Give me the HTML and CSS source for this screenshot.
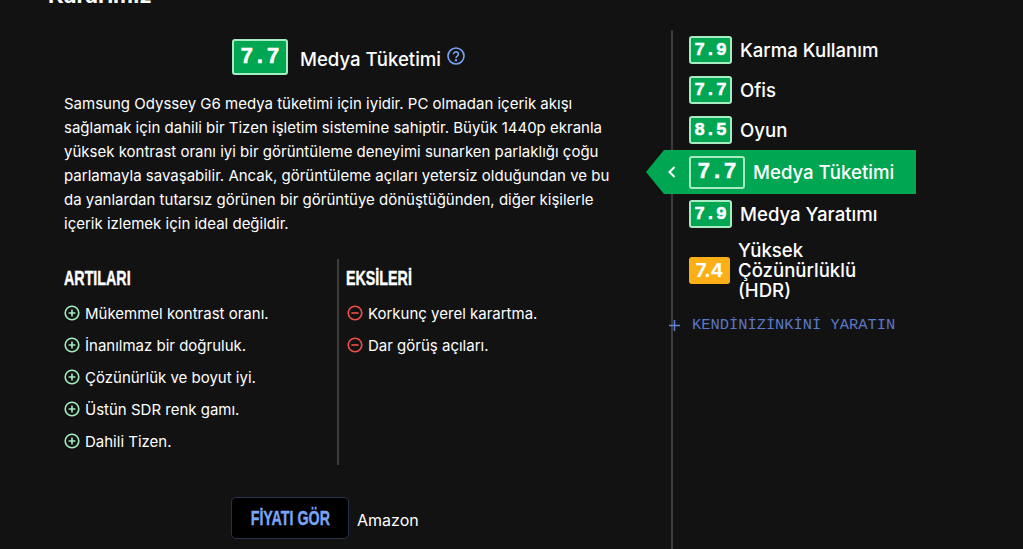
FILE: index.html
```html
<!DOCTYPE html>
<html lang="tr">
<head>
    <meta charset="UTF-8">
    <meta name="viewport" content="width=device-width, initial-scale=1.0">
    <title>Karar</title>
    <link rel="stylesheet" href="styles.css">
</head>
<body>
    <div class="panel">
        <h2 class="page-title">Kararımız</h2>

        <div class="columns">
            <!-- Main usage text -->
            <main class="verdict">
                <div class="verdict-head">
                    <span class="score score-large">7.7</span>
                    <span class="verdict-name">Medya Tüketimi</span>
                    <svg class="help-icon" width="18" height="18" viewBox="0 0 18 18" fill="none" stroke="#7aa5f5" stroke-width="1.6">
                        <circle cx="9" cy="9" r="8"></circle>
                        <path d="M6.600 7.200a2.400 2.400 0 1 1 3.700 2c-.9.6-1.300 1-1.300 1.900"></path>
                        <circle cx="9" cy="13.300" r=".5"></circle>
                    </svg>
                </div>

                <p class="verdict-text">Samsung Odyssey G6 medya tüketimi için iyidir. PC olmadan içerik akışı sağlamak için dahili bir Tizen işletim sistemine sahiptir. Büyük 1440p ekranla yüksek kontrast oranı iyi bir görüntüleme deneyimi sunarken parlaklığı çoğu parlamayla savaşabilir. Ancak, görüntüleme açıları yetersiz olduğundan ve bu da yanlardan tutarsız görünen bir görüntüye dönüştüğünden, diğer kişilerle içerik izlemek için ideal değildir.</p>

                <div class="pros-cons">
                    <div class="pros">
                        <h3 class="list-title">ARTILARI</h3>
                        <ul class="list">
                            <li><svg class="mark" viewBox="0 0 16 16"><circle class="mark-ring plus" cx="8" cy="8" r="6.800"></circle><path class="mark-line plus" d="M4.600 8h6.800M8 4.600v6.800"></path></svg>Mükemmel kontrast oranı.</li>
                            <li><svg class="mark" viewBox="0 0 16 16"><circle class="mark-ring plus" cx="8" cy="8" r="6.800"></circle><path class="mark-line plus" d="M4.600 8h6.800M8 4.600v6.800"></path></svg>İnanılmaz bir doğruluk.</li>
                            <li><svg class="mark" viewBox="0 0 16 16"><circle class="mark-ring plus" cx="8" cy="8" r="6.800"></circle><path class="mark-line plus" d="M4.600 8h6.800M8 4.600v6.800"></path></svg>Çözünürlük ve boyut iyi.</li>
                            <li><svg class="mark" viewBox="0 0 16 16"><circle class="mark-ring plus" cx="8" cy="8" r="6.800"></circle><path class="mark-line plus" d="M4.600 8h6.800M8 4.600v6.800"></path></svg>Üstün SDR renk gamı.</li>
                            <li><svg class="mark" viewBox="0 0 16 16"><circle class="mark-ring plus" cx="8" cy="8" r="6.800"></circle><path class="mark-line plus" d="M4.600 8h6.800M8 4.600v6.800"></path></svg>Dahili Tizen.</li>
                        </ul>
                    </div>
                    <div class="cons">
                        <h3 class="list-title">EKSİLERİ</h3>
                        <ul class="list">
                            <li><svg class="mark" viewBox="0 0 16 16"><circle class="mark-ring minus" cx="8" cy="8" r="6.800"></circle><path class="mark-line minus" d="M4.400 8h7.200"></path></svg>Korkunç yerel karartma.</li>
                            <li><svg class="mark" viewBox="0 0 16 16"><circle class="mark-ring minus" cx="8" cy="8" r="6.800"></circle><path class="mark-line minus" d="M4.400 8h7.200"></path></svg>Dar görüş açıları.</li>
                        </ul>
                    </div>
                </div>

                <div class="price-row">
                    <a class="price-button" href="#"><span class="price-label">FİYATI GÖR</span></a>
                    <span class="store">Amazon</span>
                </div>
            </main>

            <!-- Usage list -->
            <aside class="usages">
                <a class="usage" href="#"><span class="score">7.9</span>Karma Kullanım</a>
                <a class="usage" href="#"><span class="score">7.7</span>Ofis</a>
                <a class="usage" href="#"><span class="score">8.5</span>Oyun</a>
                <a class="usage usage-active" href="#">
                    <svg class="chevron" width="8" height="12" viewBox="0 0 8 12" fill="none" stroke="#fff" stroke-width="2"><path d="M6.500 1 1.500 6l5 5"></path></svg>
                    <span class="score score-active">7.7</span>Medya Tüketimi
                </a>
                <a class="usage" href="#"><span class="score">7.9</span>Medya Yaratımı</a>
                <a class="usage usage-tall" href="#"><span class="score score-orange">7.4</span><span class="usage-long">Yüksek Çözünürlüklü (HDR)</span></a>
                <a class="create-own" href="#">
                    <svg class="create-plus" width="11" height="11" viewBox="0 0 11 11" fill="none" stroke="#5f82d8" stroke-width="1.500"><path d="M0 5.500h11M5.500 0v11"></path></svg>
                    KENDİNİZİNKİNİ YARATIN
                </a>
            </aside>
        </div>
    </div>
</body>
</html>
```

FILE: styles.css
```css
/* General Styles */
body {
    margin: 0;
    height: 549px;
    overflow: hidden;
    background: #121212;
    font-family: 'Inter', sans-serif;
    color: #fff;
}

a {
    color: inherit;
    text-decoration: none;
}

/* Page panel */
.panel {
    width: 876px;
    height: 549px;
    margin-left: 40px;
    overflow: hidden;
}

.page-title {
    margin: -17px 0 0 8px;
    height: 47px;
    font-size: 22px;
    line-height: 24px;
    font-weight: 700;
}

.columns {
    display: flex;
    height: 519px;
}

/* Left column */
.verdict {
    width: 631px;
    box-sizing: border-box;
    padding: 9px 0 0 24px;
}

.verdict-head {
    display: flex;
    align-items: center;
    justify-content: center;
    height: 36px;
    padding-right: 38px;
}

.verdict-name {
    margin: 4px 0 0 12px;
    font-size: 18.6px;
    font-weight: 500;
}

.help-icon {
    margin: -3px 0 0 6px;
}

.verdict-text {
    margin: 17px 0 0;
    width: 556px;
    font-size: 15px;
    line-height: 24px;
}

/* Scores */
.score {
    display: inline-flex;
    align-items: center;
    justify-content: center;
    box-sizing: border-box;
    width: 43px;
    height: 28px;
    flex: none;
    background: #00a651;
    border: 2px solid #a6ebc2;
    border-radius: 3px;
    font-family: 'Liberation Mono', monospace;
    font-size: 18px;
    font-weight: 700;
    -webkit-text-stroke: 0.5px #fff;
    color: #fff;
}

.score-large {
    width: 56px;
    height: 36px;
    font-size: 22px;
}

.score-active {
    width: 56px;
    height: 33px;
    font-size: 22px;
}

.score-orange {
    width: 41px;
    height: 27px;
    background: #fcaf17;
    border: 0;
    font-family: 'Inter', sans-serif;
    font-size: 19px;
    -webkit-text-stroke: 0;
}

/* Pros and cons */
.pros-cons {
    display: flex;
    margin-top: 23px;
    height: 206px;
}

.pros {
    width: 273px;
}

.cons {
    flex: 1;
    padding-left: 7px;
    border-left: 2px solid #3c3c3c;
}

.list-title {
    margin: 0;
    padding-top: 7px;
    height: 31px;
    font-family: 'Liberation Sans', sans-serif;
    font-size: 21px;
    line-height: 24px;
    font-weight: 700;
    -webkit-text-stroke: 0.4px #fff;
    transform: scaleX(0.68);
    transform-origin: left;
}

.list {
    margin: 0;
    padding: 0;
    list-style: none;
}

.list li {
    display: flex;
    align-items: center;
    height: 32px;
    font-size: 15px;
}

.mark {
    width: 16px;
    height: 16px;
    margin-right: 5px;
    flex: none;
}

.cons .mark {
    margin-left: 1px;
}

.mark-ring,
.mark-line {
    fill: none;
    stroke-width: 1.6;
}

.plus {
    stroke: #a5eebf;
}

.minus {
    stroke: #f0504a;
}

/* Price button */
.price-row {
    display: flex;
    align-items: center;
    margin: 32px 0 0 167px;
}

.price-button {
    display: flex;
    align-items: center;
    justify-content: center;
    box-sizing: border-box;
    width: 118px;
    height: 42px;
    background: #000;
    border: 1px solid #28324a;
    border-radius: 5px;
}

.price-label {
    font-family: 'Liberation Sans', sans-serif;
    font-size: 21px;
    font-weight: 700;
    -webkit-text-stroke: 0.4px #7aa5f5;
    color: #7aa5f5;
    white-space: nowrap;
    transform: scaleX(0.68);
}

.store {
    margin: 4px 0 0 8px;
    font-size: 16px;
}

/* Right column */
.usages {
    position: relative;
    flex: 1;
    display: flex;
    flex-direction: column;
    padding: 0 0 0 16px;
    border-left: 2px solid #3c3c3c;
}

.usage {
    display: flex;
    align-items: center;
    height: 40px;
    font-size: 18.6px;
    font-weight: 500;
}

.usage .score {
    margin-right: 8px;
}

.usage-active {
    height: 44px;
    margin: 0 0 0 -43px;
    padding-left: 43px;
    background: #00a651;
    clip-path: polygon(18px 0, 100% 0, 100% 100%, 18px 100%, 0 50%);
}

.chevron {
    position: absolute;
    margin-left: -21px;
}

.usage-tall {
    height: 72px;
}

.usage-long {
    width: 130px;
    line-height: 20px;
}

.create-own {
    display: flex;
    align-items: center;
    height: 24px;
    margin: 7px 0 0 -20px;
    font-family: 'Liberation Mono', monospace;
    font-size: 15.4px;
    color: #5a78c8;
}

.create-plus {
    margin-right: 12px;
    flex: none;
}
```
